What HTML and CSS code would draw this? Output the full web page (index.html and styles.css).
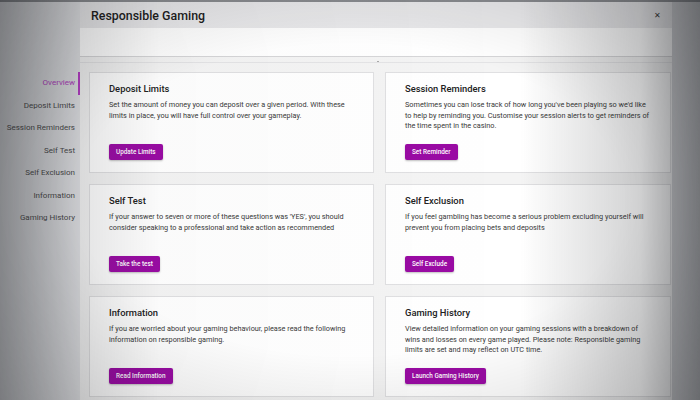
FILE: index.html
```html
<!DOCTYPE html>
<html lang="en">
<head>
  <meta charset="UTF-8">
  <meta name="viewport" content="width=device-width, initial-scale=1.0">
  <title>Responsible Gaming</title>
  <link rel="stylesheet" href="styles.css">
</head>
<body>
  <div class="page">
    <!-- Menu lateral -->
    <nav class="side-nav">
      <a href="#" class="nav-item active">Overview</a>
      <a href="#" class="nav-item">Deposit Limits</a>
      <a href="#" class="nav-item">Session Reminders</a>
      <a href="#" class="nav-item">Self Test</a>
      <a href="#" class="nav-item">Self Exclusion</a>
      <a href="#" class="nav-item">Information</a>
      <a href="#" class="nav-item">Gaming History</a>
    </nav>

    <!-- Painel principal -->
    <div class="panel">
      <div class="panel-header">
        <h2>Responsible Gaming</h2>
        <span class="close">&#10005;</span>
      </div>
      <div class="toolbar"></div>
      <div class="toolbar-sub"><span class="dot"></span></div>

      <div class="cards">
        <div class="card">
          <h3>Deposit Limits</h3>
          <p>Set the amount of money you can deposit over a given period. With these limits in place, you will have full control over your gameplay.</p>
          <button class="button">Update Limits</button>
        </div>
        <div class="card">
          <h3>Session Reminders</h3>
          <p>Sometimes you can lose track of how long you've been playing so we'd like to help by reminding you. Customise your session alerts to get reminders of the time spent in the casino.</p>
          <button class="button">Set Reminder</button>
        </div>
        <div class="card">
          <h3>Self Test</h3>
          <p>If your answer to seven or more of these questions was 'YES', you should consider speaking to a professional and take action as recommended</p>
          <button class="button">Take the test</button>
        </div>
        <div class="card">
          <h3>Self Exclusion</h3>
          <p>If you feel gambling has become a serious problem excluding yourself will prevent you from placing bets and deposits</p>
          <button class="button">Self Exclude</button>
        </div>
        <div class="card">
          <h3>Information</h3>
          <p>If you are worried about your gaming behaviour, please read the following information on responsible gaming.</p>
          <button class="button">Read Information</button>
        </div>
        <div class="card">
          <h3>Gaming History</h3>
          <p>View detailed information on your gaming sessions with a breakdown of wins and losses on every game played. Please note: Responsible gaming limits are set and may reflect on UTC time.</p>
          <button class="button">Launch Gaming History</button>
        </div>
      </div>
    </div>

    <div class="backdrop-right"></div>
  </div>

  <div class="vignette"></div>
</body>
</html>
```

FILE: styles.css
```css
body {
  margin: 0;
  font-family: Roboto, "Liberation Sans", Arial, sans-serif;
  background-color: #e2e3e6;
  color: #333;
  overflow: hidden;
}
.page {
  display: flex;
  width: 700px;
  height: 400px;
  border-top: 2px solid #8a8c90;
  box-sizing: border-box;
}
.side-nav {
  width: 80px;
  flex-shrink: 0;
  padding-top: 70px;
  display: flex;
  flex-direction: column;
}
.nav-item {
  display: block;
  height: 22.5px;
  line-height: 22.5px;
  padding-right: 5px;
  text-align: right;
  font-size: 8px;
  color: #4a4a4a;
  text-decoration: none;
  white-space: nowrap;
}
.nav-item.active {
  color: #b43cc4;
  border-right: 2px solid #b43cc4;
  padding-right: 3px;
}
.panel {
  width: 592px;
  flex-shrink: 0;
  background-color: #f4f4f4;
}
.backdrop-right {
  flex: 1;
  background-color: #d4d5d8;
}
.panel-header {
  height: 26px;
  padding: 0 11px 0 11px;
  display: flex;
  justify-content: space-between;
  align-items: center;
  background-color: #eaeaec;
}
.panel-header h2 {
  margin: 0;
  font-size: 12.4px;
  font-weight: 500;
  color: #1e1e1e;
}
.close {
  font-size: 8px;
  color: #333;
}
.toolbar {
  height: 28px;
  background-color: #fff;
  border-bottom: 1px solid #d6d6d8;
}
.toolbar-sub {
  height: 5px;
  border-bottom: 1px solid #e4e4e6;
  margin-bottom: 9px;
  position: relative;
}
.dot {
  position: absolute;
  left: 297px;
  top: 4px;
  width: 2px;
  height: 1px;
  background-color: #aaa;
}
.cards {
  display: grid;
  grid-template-columns: 285px 286px;
  grid-auto-rows: 101px;
  gap: 11px;
  padding-left: 9px;
}
.card {
  background-color: #fff;
  border: 1px solid #e0e0e2;
  padding: 10px 19px 12px;
  display: flex;
  flex-direction: column;
  align-items: flex-start;
}
.card h3 {
  margin: 0 0 6px;
  font-size: 9.4px;
  font-weight: 500;
  color: #222;
}
.card p {
  margin: 0;
  font-size: 7.3px;
  line-height: 10.5px;
  color: #3a3a3a;
}
.button {
  margin-top: auto;
  padding: 0 7px;
  height: 16px;
  border: none;
  border-radius: 2px;
  background-color: #9a0ca4;
  color: white;
  font-family: inherit;
  font-size: 6.4px;
  font-weight: 500;
  box-shadow: 0 1px 2px rgba(0, 0, 0, 0.25);
  cursor: pointer;
}
.button:hover { background-color: #800889; }
.vignette {
  position: fixed;
  inset: 0;
  pointer-events: none;
  background:
    linear-gradient(to right, rgba(30, 32, 36, 0.44) 0px, rgba(30, 32, 36, 0.12) 80px, rgba(30, 32, 36, 0.02) 160px, rgba(30, 32, 36, 0) 520px, rgba(30, 32, 36, 0.2) 640px, rgba(30, 32, 36, 0.5) 700px),
    radial-gradient(ellipse at center, rgba(0, 0, 0, 0) 55%, rgba(0, 0, 0, 0.14) 100%);
}
```
